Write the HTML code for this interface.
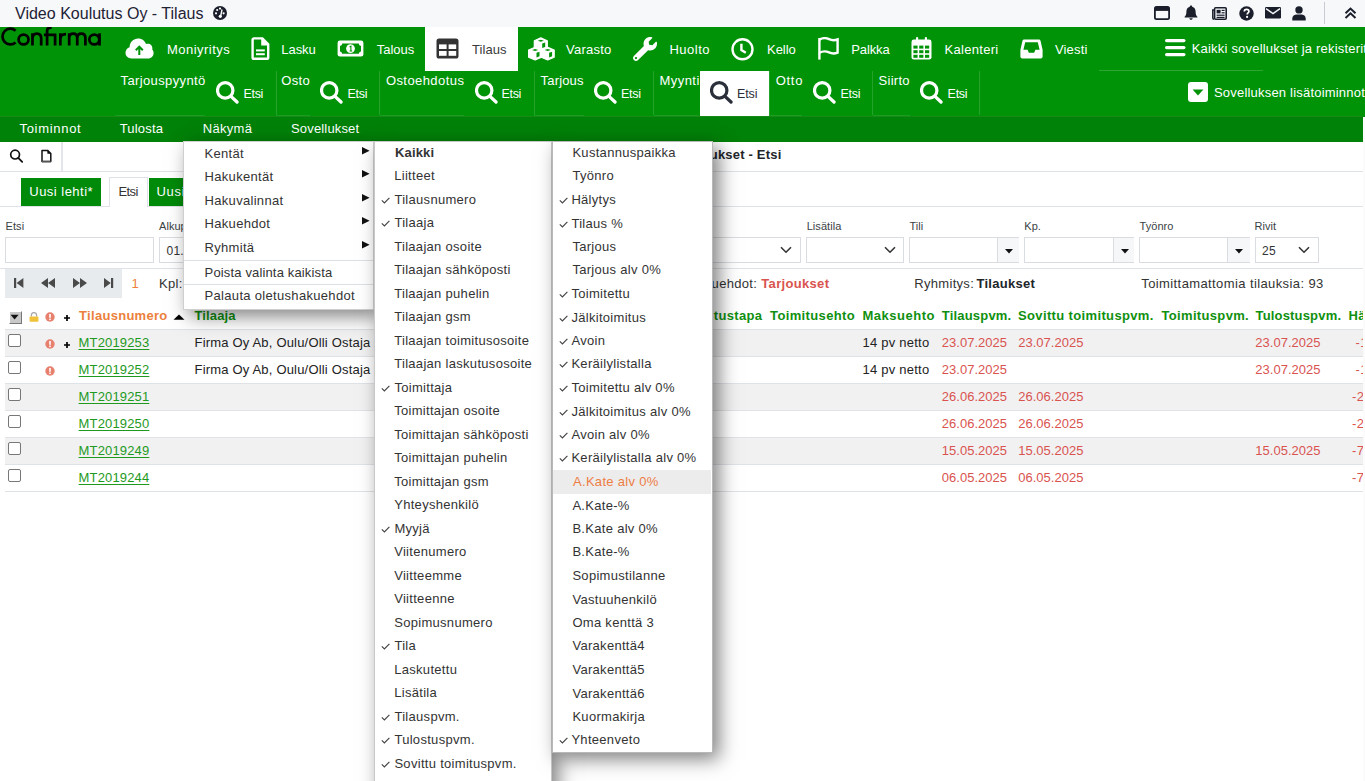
<!DOCTYPE html><html><head><meta charset="utf-8"><style>html,body{margin:0;padding:0;width:1365px;height:781px;overflow:hidden;background:#fff;}body{position:relative;font-family:"Liberation Sans", sans-serif;}.t{position:absolute;white-space:pre;line-height:1;}.L{position:absolute;left:0;top:0;width:1365px;height:781px;}</style></head><body>
<div style="position:absolute;left:0px;top:0px;width:1365px;height:27px;background:#f7f8fa;"></div>
<svg style="position:absolute;left:212px;top:5px;" width="16" height="16" viewBox="0 0 16 16"><circle cx="8" cy="8" r="7" fill="#1b1f2b"/><circle cx="4" cy="8.3" r="1.1" fill="#fff"/><circle cx="5.2" cy="5" r="1.1" fill="#fff"/><circle cx="8" cy="3.6" r="1.1" fill="#fff"/><circle cx="11.6" cy="8.3" r="1.1" fill="#fff"/><path d="M10 4.5 L8.8 10.6" stroke="#fff" stroke-width="1.4"/><circle cx="8.3" cy="11.3" r="1.6" fill="#fff"/></svg>
<svg style="position:absolute;left:1154px;top:6px;" width="16" height="14" viewBox="0 0 16 14"><rect x="0.9" y="0.9" width="14.2" height="12.2" rx="1.6" fill="none" stroke="#1b1f2b" stroke-width="1.8"/><rect x="0.9" y="0.9" width="14.2" height="4" fill="#1b1f2b"/></svg>
<svg style="position:absolute;left:1184px;top:5px;" width="14" height="15" viewBox="0 0 14 15"><path d="M7 0.5 C7.8 0.5 8.2 1 8.2 1.7 C10.6 2.2 11.6 4.2 11.6 6.6 C11.6 9.6 12.2 10.8 13.4 11.8 L13.4 12.6 L0.6 12.6 L0.6 11.8 C1.8 10.8 2.4 9.6 2.4 6.6 C2.4 4.2 3.4 2.2 5.8 1.7 C5.8 1 6.2 0.5 7 0.5 Z" fill="#1b1f2b"/><path d="M5.3 13.3 L8.7 13.3 C8.7 14.2 8 14.8 7 14.8 C6 14.8 5.3 14.2 5.3 13.3Z" fill="#1b1f2b"/></svg>
<svg style="position:absolute;left:1212px;top:7px;" width="15" height="13" viewBox="0 0 15 13"><rect x="2.6" y="0.8" width="11.6" height="11.4" rx="1" fill="none" stroke="#1b1f2b" stroke-width="1.6"/><path d="M2.6 3 L0.8 3 L0.8 11 C0.8 11.8 1.4 12.2 2 12.2" fill="none" stroke="#1b1f2b" stroke-width="1.5"/><rect x="4.6" y="2.8" width="4" height="3.6" fill="#1b1f2b"/><rect x="9.6" y="2.8" width="3" height="1.2" fill="#1b1f2b"/><rect x="9.6" y="5.2" width="3" height="1.2" fill="#1b1f2b"/><rect x="4.6" y="7.6" width="8" height="1.2" fill="#1b1f2b"/><rect x="4.6" y="9.8" width="8" height="1.2" fill="#1b1f2b"/></svg>
<svg style="position:absolute;left:1239px;top:6px;" width="15" height="15" viewBox="0 0 15 15"><circle cx="7.5" cy="7.5" r="7.2" fill="#1b1f2b"/><path d="M5.3 5.6 C5.3 4.2 6.3 3.4 7.6 3.4 C8.9 3.4 9.9 4.2 9.9 5.4 C9.9 6.9 8.2 7 8.2 8.4" fill="none" stroke="#fff" stroke-width="1.7"/><circle cx="8.1" cy="10.9" r="1.1" fill="#fff"/></svg>
<svg style="position:absolute;left:1265px;top:7px;" width="16" height="12" viewBox="0 0 16 12"><rect x="0" y="0" width="16" height="11.5" rx="1.2" fill="#1b1f2b"/><path d="M1 1.6 L8 6.6 L15 1.6" fill="none" stroke="#f7f8fa" stroke-width="1.4"/></svg>
<svg style="position:absolute;left:1292px;top:6px;" width="14" height="15" viewBox="0 0 14 15"><circle cx="7" cy="3.9" r="3.7" fill="#1b1f2b"/><path d="M0.3 14.5 L0.3 12.6 C0.3 10.2 2.4 8.6 4.8 8.6 L9.2 8.6 C11.6 8.6 13.7 10.2 13.7 12.6 L13.7 14.5 Z" fill="#1b1f2b"/></svg>
<div style="position:absolute;left:1324px;top:2px;width:1px;height:22px;background:#c8ccd2;"></div>
<svg style="position:absolute;left:1344px;top:7px;" width="13" height="12" viewBox="0 0 13 12"><path d="M1.5 6.2 L6.5 1.5 L11.5 6.2 M1.5 11 L6.5 6.3 L11.5 11" fill="none" stroke="#1b1f2b" stroke-width="2"/></svg>
<div style="position:absolute;left:0px;top:27px;width:1365px;height:90px;background:#009308;"></div>
<svg style="position:absolute;left:0px;top:27px;" width="104" height="21" viewBox="0 27 104 21"><g fill="none" stroke="#000" stroke-width="2.75"><path d="M15.6 30.7 A7.85 7.85 0 1 0 15.6 42.4"/><circle cx="23.55" cy="39.5" r="4.95"/><path d="M32.5 45.6 V33.3 M32.5 38.6 C32.5 35.4 34.4 33.6 36.85 33.6 C39.3 33.6 41.2 35.4 41.2 38.6 V45.6"/><path d="M47.1 45.6 V31 C47.1 28.8 48.4 27.6 50.4 27.6 L51.6 27.6 M43.9 34.8 H56.4 M55.1 34 V45.6"/><path d="M60.35 45.6 V33.3 M60.35 38.8 C60.35 35.6 62.4 34 66 34"/><path d="M69.2 45.6 V33.3 M69.2 38.2 C69.2 35.4 70.8 33.6 73.2 33.6 C75.6 33.6 77.25 35.4 77.25 38.2 V45.6 M77.25 38.2 C77.25 35.4 78.9 33.6 81.3 33.6 C83.7 33.6 85.4 35.4 85.4 38.2 V45.6"/><circle cx="94.3" cy="39.5" r="4.95"/><path d="M99.5 33.3 V45.6"/></g></svg>
<svg style="position:absolute;left:125px;top:38px;" width="29" height="21" viewBox="0 0 29 21"><path d="M6.5 20.5 C3 20.5 0.5 18 0.5 14.8 C0.5 12.2 2.2 10 4.6 9.3 C4.6 4.4 8.4 0.6 13.2 0.6 C16.8 0.6 19.8 2.8 21 6 C21.6 5.8 22.2 5.7 22.8 5.7 C25.4 5.7 27.4 7.8 27.4 10.3 C27.4 10.8 27.3 11.2 27.2 11.6 C28.2 12.6 28.6 13.6 28.6 15 C28.6 18 26.2 20.5 23.2 20.5 Z" fill="#fff"/><path d="M14.3 17 L14.3 9 M10.8 12.3 L14.3 8.6 L17.8 12.3" fill="none" stroke="#009308" stroke-width="2"/></svg>
<svg style="position:absolute;left:251px;top:37px;" width="19" height="23" viewBox="0 0 19 23"><path d="M1.6 2.8 C1.6 2 2.2 1.4 3 1.4 L11.4 1.4 L17.2 7.2 L17.2 20.4 C17.2 21.2 16.6 21.8 15.8 21.8 L3 21.8 C2.2 21.8 1.6 21.2 1.6 20.4 Z" fill="none" stroke="#fff" stroke-width="2.4"/><path d="M11 1.4 L11 7.6 L17.2 7.6" fill="#fff" stroke="#fff" stroke-width="1.6"/><rect x="5" y="12.4" width="8.8" height="2" fill="#fff"/><rect x="5" y="16.2" width="8.8" height="2" fill="#fff"/></svg>
<svg style="position:absolute;left:337px;top:40px;" width="27" height="17" viewBox="0 0 27 17"><rect x="0.6" y="0.6" width="25.8" height="16" rx="2.4" fill="#fff"/><path d="M5.2 3.4 L21.8 3.4 C22 4.8 22.8 5.6 24 5.8 L24 11.4 C22.8 11.6 22 12.4 21.8 13.8 L5.2 13.8 C5 12.4 4.2 11.6 3 11.4 L3 5.8 C4.2 5.6 5 4.8 5.2 3.4 Z" fill="#009308"/><circle cx="13.5" cy="8.6" r="4.4" fill="#fff"/><path d="M12.6 6.9 L13.9 6.2 L13.9 11 M12.6 11 L15.2 11" fill="none" stroke="#009308" stroke-width="1.1"/></svg>
<div style="position:absolute;left:425px;top:27px;width:93px;height:44px;background:#fff;"></div>
<svg style="position:absolute;left:436px;top:38px;" width="23" height="21" viewBox="0 0 23 21"><rect x="0.5" y="0.5" width="22" height="20" rx="2.6" fill="#333"/><rect x="3" y="6.4" width="7.6" height="4.6" fill="#fff"/><rect x="12.6" y="6.4" width="7.6" height="4.6" fill="#fff"/><rect x="3" y="13" width="7.6" height="4.8" fill="#fff"/><rect x="12.6" y="13" width="7.6" height="4.8" fill="#fff"/></svg>
<svg style="position:absolute;left:528px;top:37px;" width="27" height="24" viewBox="0 0 27 24"><path d="M6.3 3.6999999999999997 L12.8 0.9 L19.3 3.6999999999999997 L19.3 10.9 L12.8 13.700000000000001 L6.3 10.9 Z" fill="#fff" stroke="#fff" stroke-width="1.2" stroke-linejoin="round"/><path d="M9.7 3.8 L12.8 2.8 L15.899999999999999 3.8 L12.8 4.8 Z" fill="#009308"/><path d="M14.2 6.5 L17.2 5.5 L17.2 9.9 L14.2 11.1 Z" fill="#009308"/><path d="M0.6 13.0 L7.1 10.2 L13.6 13.0 L13.6 20.2 L7.1 23.0 L0.6 20.2 Z" fill="#fff" stroke="#fff" stroke-width="1.2" stroke-linejoin="round"/><path d="M4.0 13.1 L7.1 12.1 L10.2 13.1 L7.1 14.1 Z" fill="#009308"/><path d="M8.5 15.799999999999999 L11.5 14.799999999999999 L11.5 19.2 L8.5 20.4 Z" fill="#009308"/><path d="M13.2 13.0 L19.7 10.2 L26.2 13.0 L26.2 20.2 L19.7 23.0 L13.2 20.2 Z" fill="#fff" stroke="#fff" stroke-width="1.2" stroke-linejoin="round"/><path d="M16.599999999999998 13.1 L19.7 12.1 L22.799999999999997 13.1 L19.7 14.1 Z" fill="#009308"/><path d="M21.1 15.799999999999999 L24.1 14.799999999999999 L24.1 19.2 L21.1 20.4 Z" fill="#009308"/></svg>
<svg style="position:absolute;left:633px;top:37px;" width="24" height="24" viewBox="0 0 512 512"><path fill="#fff" d="M507.73 109.1c-2.24-9.03-13.54-12.09-20.12-5.51l-74.36 74.36-67.88-11.31-11.31-67.88 74.36-74.36c6.62-6.62 3.43-17.9-5.66-20.16-47.38-11.74-99.55.91-136.58 37.930-39.64 39.64-50.55 97.1-34.05 147.2L18.74 402.76c-24.990 24.99-24.99 65.51 0 90.5 24.99 24.99 65.51 24.99 90.5 0l213.21-213.21c50.12 16.71 107.47 5.68 147.37-34.22 37.07-37.07 49.7-89.320 37.91-136.73zM64 472c-13.25 0-24-10.75-24-24 0-13.26 10.75-24 24-24s24 10.74 24 24c0 13.25-10.75 24-24 24z"/></svg>
<svg style="position:absolute;left:731px;top:38px;" width="23" height="23" viewBox="0 0 23 23"><circle cx="11.5" cy="11.3" r="10" fill="none" stroke="#fff" stroke-width="2.4"/><path d="M10.4 5.8 L10.4 12 L14.8 14.8" fill="none" stroke="#fff" stroke-width="2.4" stroke-linejoin="miter"/></svg>
<svg style="position:absolute;left:818px;top:37px;" width="21" height="23" viewBox="0 0 21 23"><path d="M1.4 1 L1.4 22.6" stroke="#fff" stroke-width="2.4"/><path d="M1.4 2.6 C5 0.6 8 0.8 11 2.2 C14 3.6 16.6 3.6 19.6 2.4 L19.6 15.6 C16.6 16.8 14 16.8 11 15.4 C8 14 5 13.8 1.4 15.8" fill="none" stroke="#fff" stroke-width="2.4"/></svg>
<svg style="position:absolute;left:911px;top:37px;" width="21" height="23" viewBox="0 0 21 23"><rect x="0.5" y="2.6" width="20" height="20" rx="2.4" fill="#fff"/><rect x="5" y="0" width="2.2" height="4.4" rx="1" fill="#fff"/><rect x="13.8" y="0" width="2.2" height="4.4" rx="1" fill="#fff"/><rect x="2.4" y="8.6" width="4.2" height="3" fill="#009308"/><rect x="8.2" y="8.6" width="4.2" height="3" fill="#009308"/><rect x="14.0" y="8.6" width="4.2" height="3" fill="#009308"/><rect x="2.4" y="13.2" width="4.2" height="3" fill="#009308"/><rect x="8.2" y="13.2" width="4.2" height="3" fill="#009308"/><rect x="14.0" y="13.2" width="4.2" height="3" fill="#009308"/><rect x="2.4" y="17.799999999999997" width="4.2" height="3" fill="#009308"/><rect x="8.2" y="17.799999999999997" width="4.2" height="3" fill="#009308"/><rect x="14.0" y="17.799999999999997" width="4.2" height="3" fill="#009308"/></svg>
<svg style="position:absolute;left:1020px;top:39px;" width="23" height="20" viewBox="0 0 23 20"><path d="M4.2 0.5 L18.8 0.5 C19.8 0.5 20.4 1.2 20.6 2 L22.6 11 L22.6 17.6 C22.6 18.8 21.8 19.6 20.6 19.6 L2.4 19.6 C1.2 19.6 0.4 18.8 0.4 17.6 L0.4 11 L2.4 2 C2.6 1.2 3.2 0.5 4.2 0.5 Z" fill="#fff"/><path d="M5.2 3.2 L17.8 3.2 L19.6 10.8 L15.4 10.8 L14.2 13.8 L8.8 13.8 L7.6 10.8 L3.4 10.8 Z" fill="#009308"/></svg>
<svg style="position:absolute;left:1165px;top:39px;" width="21" height="18" viewBox="0 0 21 18"><g fill="#fff"><rect x="0" y="0" width="20.5" height="3.2" rx="1.6"/><rect x="0" y="7" width="20.5" height="3.2" rx="1.6"/><rect x="0" y="14" width="20.5" height="3.2" rx="1.6"/></g></svg>
<div style="position:absolute;left:1099px;top:70px;width:164px;height:1px;background:rgba(255,255,255,0.18);"></div>
<svg style="position:absolute;left:1188px;top:82px;" width="20" height="20" viewBox="0 0 20 20"><rect x="0" y="0" width="20" height="20" rx="3" fill="#fff"/><path d="M4.6 7.4 L15.4 7.4 L10 13.6 Z" fill="#009308"/></svg>
<svg style="position:absolute;left:215.5px;top:81px;" width="23" height="23" viewBox="0 0 23 23"><circle cx="9.2" cy="9.4" r="7.7" fill="none" stroke="#fff" stroke-width="3.2"/><path d="M15 15.4 L21 21" stroke="#fff" stroke-width="3.3" stroke-linecap="round"/></svg>
<div style="position:absolute;left:275.7px;top:71px;width:1.0px;height:44px;background:rgba(255,255,255,0.14);"></div>
<div style="position:absolute;left:115px;top:115px;width:90.19999999999999px;height:1px;background:rgba(255,255,255,0.10);"></div>
<svg style="position:absolute;left:320.2px;top:81px;" width="23" height="23" viewBox="0 0 23 23"><circle cx="9.2" cy="9.4" r="7.7" fill="none" stroke="#fff" stroke-width="3.2"/><path d="M15 15.4 L21 21" stroke="#fff" stroke-width="3.3" stroke-linecap="round"/></svg>
<div style="position:absolute;left:379.4px;top:71px;width:1.0px;height:44px;background:rgba(255,255,255,0.14);"></div>
<div style="position:absolute;left:276px;top:115px;width:33.69999999999999px;height:1px;background:rgba(255,255,255,0.10);"></div>
<svg style="position:absolute;left:474.5px;top:81px;" width="23" height="23" viewBox="0 0 23 23"><circle cx="9.2" cy="9.4" r="7.7" fill="none" stroke="#fff" stroke-width="3.2"/><path d="M15 15.4 L21 21" stroke="#fff" stroke-width="3.3" stroke-linecap="round"/></svg>
<div style="position:absolute;left:533.5px;top:71px;width:1.0px;height:44px;background:rgba(255,255,255,0.14);"></div>
<div style="position:absolute;left:380px;top:115px;width:83.89999999999998px;height:1px;background:rgba(255,255,255,0.10);"></div>
<svg style="position:absolute;left:594.0px;top:81px;" width="23" height="23" viewBox="0 0 23 23"><circle cx="9.2" cy="9.4" r="7.7" fill="none" stroke="#fff" stroke-width="3.2"/><path d="M15 15.4 L21 21" stroke="#fff" stroke-width="3.3" stroke-linecap="round"/></svg>
<div style="position:absolute;left:653px;top:71px;width:1px;height:44px;background:rgba(255,255,255,0.14);"></div>
<div style="position:absolute;left:534px;top:115px;width:49.5px;height:1px;background:rgba(255,255,255,0.10);"></div>
<div style="position:absolute;left:700px;top:71px;width:69px;height:45px;background:#fff;"></div>
<svg style="position:absolute;left:710.0px;top:81px;" width="23" height="23" viewBox="0 0 23 23"><circle cx="9.2" cy="9.4" r="7.7" fill="none" stroke="#2a2f3a" stroke-width="3.2"/><path d="M15 15.4 L21 21" stroke="#2a2f3a" stroke-width="3.3" stroke-linecap="round"/></svg>
<div style="position:absolute;left:769px;top:71px;width:1px;height:44px;background:rgba(255,255,255,0.14);"></div>
<div style="position:absolute;left:654px;top:115px;width:45.299999999999955px;height:1px;background:rgba(255,255,255,0.10);"></div>
<svg style="position:absolute;left:812.5px;top:81px;" width="23" height="23" viewBox="0 0 23 23"><circle cx="9.2" cy="9.4" r="7.7" fill="none" stroke="#fff" stroke-width="3.2"/><path d="M15 15.4 L21 21" stroke="#fff" stroke-width="3.3" stroke-linecap="round"/></svg>
<div style="position:absolute;left:872.4px;top:71px;width:1.0px;height:44px;background:rgba(255,255,255,0.14);"></div>
<div style="position:absolute;left:769px;top:115px;width:33.39999999999998px;height:1px;background:rgba(255,255,255,0.10);"></div>
<svg style="position:absolute;left:920.2px;top:81px;" width="23" height="23" viewBox="0 0 23 23"><circle cx="9.2" cy="9.4" r="7.7" fill="none" stroke="#fff" stroke-width="3.2"/><path d="M15 15.4 L21 21" stroke="#fff" stroke-width="3.3" stroke-linecap="round"/></svg>
<div style="position:absolute;left:979.3px;top:71px;width:1.0px;height:44px;background:rgba(255,255,255,0.14);"></div>
<div style="position:absolute;left:873px;top:115px;width:36.5px;height:1px;background:rgba(255,255,255,0.10);"></div>
<div style="position:absolute;left:0px;top:117px;width:1363px;height:25px;background:#008108;"></div>
<div style="position:absolute;left:0px;top:116px;width:1363px;height:1px;background:rgb(24,136,22);"></div>
<div style="position:absolute;left:1363px;top:117px;width:2px;height:664px;background:#fbfbfb;"></div>
<svg style="position:absolute;left:9px;top:149px;" width="15" height="15" viewBox="0 0 15 15"><circle cx="6.1" cy="5.6" r="4.4" fill="none" stroke="#111" stroke-width="1.7"/><path d="M9.2 8.9 L13.2 12.9" stroke="#111" stroke-width="1.8" stroke-linecap="round"/></svg>
<svg style="position:absolute;left:40px;top:149px;" width="13" height="15" viewBox="0 0 13 15"><path d="M2 1.4 L7.6 1.4 L10.8 4.6 L10.8 12.6 L2 12.6 Z" fill="none" stroke="#111" stroke-width="1.5" stroke-linejoin="round"/><path d="M7.4 1.4 L7.4 4.8 L10.8 4.8 Z" fill="#111"/><path d="M2 12.6 L10.8 12.6" stroke="#555" stroke-width="1.5"/></svg>
<div style="position:absolute;left:61px;top:142px;width:2px;height:29px;background:#e2e5e9;"></div>
<div style="position:absolute;left:0px;top:171px;width:1363px;height:1px;background:#dfe3e7;"></div>
<div style="position:absolute;left:21px;top:178px;width:80px;height:28px;background:#008a0a;"></div>
<div style="position:absolute;left:0px;top:206px;width:1363px;height:1px;background:#dfe3e7;"></div>
<div style="position:absolute;left:109px;top:177px;width:37px;height:29px;border:1px solid #dfe3e7;border-bottom:none;background:#fff"></div>
<div style="position:absolute;left:110px;top:206px;width:37px;height:1px;background:#fff;"></div>
<div style="position:absolute;left:149px;top:178px;width:81px;height:28px;background:#008a0a;"></div>
<div style="position:absolute;left:5px;top:237px;width:147px;height:24px;border:1px solid #d9dde1;background:#fff;"></div>
<div style="position:absolute;left:159px;top:237px;width:139px;height:24px;border:1px solid #d9dde1;background:#fff;"></div>
<div style="position:absolute;left:600px;top:237px;width:199px;height:24px;border:1px solid #d9dde1;background:#fff;"></div>
<svg style="position:absolute;left:780px;top:246px;" width="12" height="8" viewBox="0 0 12 8"><path d="M1 1.2 L6 6.2 L11 1.2" fill="none" stroke="#333" stroke-width="1.6"/></svg>
<div style="position:absolute;left:806px;top:237px;width:96px;height:24px;border:1px solid #d9dde1;background:#fff;"></div>
<svg style="position:absolute;left:883.5px;top:246px;" width="12" height="8" viewBox="0 0 12 8"><path d="M1 1.2 L6 6.2 L11 1.2" fill="none" stroke="#333" stroke-width="1.6"/></svg>
<div style="position:absolute;left:909px;top:237px;width:108px;height:24px;border:1px solid #d9dde1;background:#fff;"></div>
<div style="position:absolute;left:997px;top:238px;width:21px;height:24px;border-left:1px solid #d9dde1;background:#f6f7f8"></div>
<svg style="position:absolute;left:1005px;top:249px;" width="8" height="5" viewBox="0 0 8 5"><path d="M0 0 L8 0 L4 4.5 Z" fill="#111"/></svg>
<div style="position:absolute;left:1024px;top:237px;width:108px;height:24px;border:1px solid #d9dde1;background:#fff;"></div>
<div style="position:absolute;left:1112.5px;top:238px;width:20.5px;height:24px;border-left:1px solid #d9dde1;background:#f6f7f8"></div>
<svg style="position:absolute;left:1120.5px;top:249px;" width="8" height="5" viewBox="0 0 8 5"><path d="M0 0 L8 0 L4 4.5 Z" fill="#111"/></svg>
<div style="position:absolute;left:1139px;top:237px;width:109px;height:24px;border:1px solid #d9dde1;background:#fff;"></div>
<div style="position:absolute;left:1227px;top:238px;width:22px;height:24px;border-left:1px solid #d9dde1;background:#f6f7f8"></div>
<svg style="position:absolute;left:1235px;top:249px;" width="8" height="5" viewBox="0 0 8 5"><path d="M0 0 L8 0 L4 4.5 Z" fill="#111"/></svg>
<div style="position:absolute;left:1255px;top:237px;width:62px;height:24px;border:1px solid #d9dde1;background:#fff;"></div>
<svg style="position:absolute;left:1298px;top:246px;" width="12" height="8" viewBox="0 0 12 8"><path d="M1 1.2 L6 6.2 L11 1.2" fill="none" stroke="#333" stroke-width="1.6"/></svg>
<div style="position:absolute;left:0px;top:268px;width:1363px;height:1px;background:#dfe3e7;"></div>
<div style="position:absolute;left:5px;top:269px;width:117px;height:29px;background:#e8ebee;"></div>
<svg style="position:absolute;left:14px;top:278px;" width="10" height="10" viewBox="0 0 10 10"><rect x="0" y="0" width="2.2" height="10" fill="#4a4a4a"/><path d="M9.4 0 L9.4 10 L2.6 5 Z" fill="#4a4a4a"/></svg>
<svg style="position:absolute;left:41px;top:278px;" width="14" height="10" viewBox="0 0 14 10"><path d="M7 0 L7 10 L0 5 Z M14 0 L14 10 L7 5 Z" fill="#4a4a4a"/></svg>
<svg style="position:absolute;left:73px;top:278px;" width="14" height="10" viewBox="0 0 14 10"><path d="M0 0 L0 10 L7 5 Z M7 0 L7 10 L14 5 Z" fill="#4a4a4a"/></svg>
<svg style="position:absolute;left:104px;top:278px;" width="10" height="10" viewBox="0 0 10 10"><path d="M0 0 L0 10 L6.8 5 Z" fill="#4a4a4a"/><rect x="7" y="0" width="2.2" height="10" fill="#4a4a4a"/></svg>
<div style="position:absolute;left:9px;top:311px;width:11px;height:11px;background:#c8c8c8;border-top:1px solid #fff;border-left:1px solid #fff;border-right:1px solid #777;border-bottom:1px solid #777;"></div>
<svg style="position:absolute;left:10px;top:314px;" width="10" height="7" viewBox="0 0 10 7"><path d="M0.6 0.8 L8.6 0.8 L4.6 5.6 Z" fill="#111"/></svg>
<svg style="position:absolute;left:29px;top:312px;" width="10" height="10" viewBox="0 0 10 10"><path d="M2.4 4.6 L2.4 3.2 C2.4 1.6 3.5 0.6 5 0.6 C6.5 0.6 7.6 1.6 7.6 3.2 L7.6 4.6" fill="none" stroke="#a8a8a8" stroke-width="1.3"/><rect x="0.6" y="4.4" width="8.8" height="5.4" rx="0.8" fill="#f0c23a"/></svg>
<svg style="position:absolute;left:45px;top:312px;" width="10" height="10" viewBox="0 0 10 10"><circle cx="5" cy="5" r="4.7" fill="#e8806e"/><rect x="4.2" y="2" width="1.6" height="3.8" fill="#fff"/><rect x="4.2" y="6.6" width="1.6" height="1.5" fill="#fff"/></svg>
<svg style="position:absolute;left:63px;top:313.5px;" width="8" height="8" viewBox="0 0 8 8"><path d="M4 1 L4 7 M1 4 L7 4" stroke="#000" stroke-width="1.7"/></svg>
<svg style="position:absolute;left:173px;top:314px;" width="12" height="6" viewBox="0 0 12 6"><path d="M0.5 5.8 L6 0.5 L11.5 5.8 Z" fill="#000"/></svg>
<div style="position:absolute;left:5px;top:329px;width:1358px;height:27px;background:#f1f1f2;"></div>
<div style="position:absolute;left:5px;top:329px;width:1358px;height:1px;background:#dfe2e6;"></div>
<div style="position:absolute;left:8px;top:334px;width:11px;height:11px;border:1px solid #777;border-radius:2px;background:#fff"></div>
<svg style="position:absolute;left:45px;top:339px;" width="10" height="10" viewBox="0 0 10 10"><circle cx="5" cy="5" r="4.7" fill="#e8806e"/><rect x="4.2" y="2" width="1.6" height="3.8" fill="#fff"/><rect x="4.2" y="6.6" width="1.6" height="1.5" fill="#fff"/></svg>
<svg style="position:absolute;left:63px;top:340.5px;" width="8" height="8" viewBox="0 0 8 8"><path d="M4 1 L4 7 M1 4 L7 4" stroke="#000" stroke-width="1.7"/></svg>
<div style="position:absolute;left:5px;top:356px;width:1358px;height:1px;background:#dfe2e6;"></div>
<div style="position:absolute;left:8px;top:361px;width:11px;height:11px;border:1px solid #777;border-radius:2px;background:#fff"></div>
<svg style="position:absolute;left:45px;top:366px;" width="10" height="10" viewBox="0 0 10 10"><circle cx="5" cy="5" r="4.7" fill="#e8806e"/><rect x="4.2" y="2" width="1.6" height="3.8" fill="#fff"/><rect x="4.2" y="6.6" width="1.6" height="1.5" fill="#fff"/></svg>
<div style="position:absolute;left:5px;top:383px;width:1358px;height:27px;background:#f1f1f2;"></div>
<div style="position:absolute;left:5px;top:383px;width:1358px;height:1px;background:#dfe2e6;"></div>
<div style="position:absolute;left:8px;top:388px;width:11px;height:11px;border:1px solid #777;border-radius:2px;background:#fff"></div>
<div style="position:absolute;left:5px;top:410px;width:1358px;height:1px;background:#dfe2e6;"></div>
<div style="position:absolute;left:8px;top:415px;width:11px;height:11px;border:1px solid #777;border-radius:2px;background:#fff"></div>
<div style="position:absolute;left:5px;top:437px;width:1358px;height:27px;background:#f1f1f2;"></div>
<div style="position:absolute;left:5px;top:437px;width:1358px;height:1px;background:#dfe2e6;"></div>
<div style="position:absolute;left:8px;top:442px;width:11px;height:11px;border:1px solid #777;border-radius:2px;background:#fff"></div>
<div style="position:absolute;left:5px;top:464px;width:1358px;height:1px;background:#dfe2e6;"></div>
<div style="position:absolute;left:8px;top:469px;width:11px;height:11px;border:1px solid #777;border-radius:2px;background:#fff"></div>
<div style="position:absolute;left:5px;top:491px;width:1358px;height:1px;background:#dfe2e6;"></div>
<span class="t" style="left:15px;top:5.60px;font-size:16px;color:#1e2235;letter-spacing:0.010px;">Video Koulutus Oy - Tilaus</span>
<span class="t" style="left:167px;top:43.00px;font-size:13px;color:#fff;letter-spacing:0.465px;">Moniyritys</span>
<span class="t" style="left:281.3px;top:43.00px;font-size:13px;color:#fff;letter-spacing:-0.051px;">Lasku</span>
<span class="t" style="left:376.7px;top:43.00px;font-size:13px;color:#fff;letter-spacing:0.004px;">Talous</span>
<span class="t" style="left:472px;top:43.00px;font-size:13px;color:#3a3a3a;letter-spacing:0.059px;">Tilaus</span>
<span class="t" style="left:566px;top:43.00px;font-size:13px;color:#fff;letter-spacing:0.226px;">Varasto</span>
<span class="t" style="left:669.5px;top:43.00px;font-size:13px;color:#fff;letter-spacing:0.484px;">Huolto</span>
<span class="t" style="left:767px;top:43.00px;font-size:13px;color:#fff;letter-spacing:-0.030px;">Kello</span>
<span class="t" style="left:851.2px;top:43.00px;font-size:13px;color:#fff;letter-spacing:-0.106px;">Palkka</span>
<span class="t" style="left:944.6px;top:43.00px;font-size:13px;color:#fff;letter-spacing:0.286px;">Kalenteri</span>
<span class="t" style="left:1055px;top:43.00px;font-size:13px;color:#fff;letter-spacing:0.147px;">Viesti</span>
<span class="t" style="left:1191.7px;top:41.50px;font-size:13px;color:#fff;letter-spacing:0.200px;">Kaikki sovellukset ja rekisterit</span>
<span class="t" style="left:1214px;top:85.50px;font-size:13px;color:#fff;letter-spacing:0.200px;">Sovelluksen lisätoiminnot</span>
<span class="t" style="left:120.6px;top:74.00px;font-size:13px;color:#fff;letter-spacing:0.365px;">Tarjouspyyntö</span>
<span class="t" style="left:243.4px;top:88.00px;font-size:12.5px;color:#fff;letter-spacing:-0.281px;">Etsi</span>
<span class="t" style="left:281.2px;top:74.00px;font-size:13px;color:#fff;letter-spacing:0.344px;">Osto</span>
<span class="t" style="left:347.5px;top:88.00px;font-size:12.5px;color:#fff;letter-spacing:-0.281px;">Etsi</span>
<span class="t" style="left:385.9px;top:74.00px;font-size:13px;color:#fff;letter-spacing:0.428px;">Ostoehdotus</span>
<span class="t" style="left:501.4px;top:88.00px;font-size:12.5px;color:#fff;letter-spacing:-0.281px;">Etsi</span>
<span class="t" style="left:540.6px;top:74.00px;font-size:13px;color:#fff;letter-spacing:0.163px;">Tarjous</span>
<span class="t" style="left:621px;top:88.00px;font-size:12.5px;color:#fff;letter-spacing:-0.281px;">Etsi</span>
<span class="t" style="left:659.5px;top:74.00px;font-size:13px;color:#fff;letter-spacing:0.447px;">Myynti</span>
<span class="t" style="left:737px;top:88.00px;font-size:12.5px;color:#2a2f3a;letter-spacing:-0.115px;">Etsi</span>
<span class="t" style="left:775.8px;top:74.00px;font-size:13px;color:#fff;letter-spacing:0.674px;">Otto</span>
<span class="t" style="left:840.5px;top:88.00px;font-size:12.5px;color:#fff;letter-spacing:-0.281px;">Etsi</span>
<span class="t" style="left:878.6px;top:74.00px;font-size:13px;color:#fff;letter-spacing:0.255px;">Siirto</span>
<span class="t" style="left:947.6px;top:88.00px;font-size:12.5px;color:#fff;letter-spacing:-0.281px;">Etsi</span>
<span class="t" style="left:19.5px;top:122.00px;font-size:13px;color:#fff;letter-spacing:0.695px;">Toiminnot</span>
<span class="t" style="left:119.7px;top:122.00px;font-size:13px;color:#fff;letter-spacing:0.191px;">Tulosta</span>
<span class="t" style="left:202.7px;top:122.00px;font-size:13px;color:#fff;letter-spacing:0.322px;">Näkymä</span>
<span class="t" style="left:291px;top:122.00px;font-size:13px;color:#fff;letter-spacing:0.162px;">Sovellukset</span>
<span class="t" style="right:583.5px;top:148.00px;font-size:13px;font-weight:700;color:#212529;letter-spacing:0.200px;">Tilaukset - Etsi</span>
<span class="t" style="left:29.3px;top:185.00px;font-size:13px;color:#fff;letter-spacing:0.477px;">Uusi lehti*</span>
<span class="t" style="left:118.4px;top:185.00px;font-size:13px;color:#333;letter-spacing:-0.557px;">Etsi</span>
<span class="t" style="left:156.5px;top:185.00px;font-size:13px;color:#fff;letter-spacing:0.726px;">Uusi lehti</span>
<span class="t" style="left:5.6px;top:220.50px;font-size:11px;color:#3a3f44;letter-spacing:0.050px;">Etsi</span>
<span class="t" style="left:159px;top:220.50px;font-size:11px;color:#3a3f44;letter-spacing:0.050px;">Alkupvm</span>
<span class="t" style="left:806.7px;top:220.50px;font-size:11px;color:#3a3f44;letter-spacing:0.050px;">Lisätila</span>
<span class="t" style="left:909.5px;top:220.50px;font-size:11px;color:#3a3f44;letter-spacing:0.050px;">Tili</span>
<span class="t" style="left:1024.3px;top:220.50px;font-size:11px;color:#3a3f44;letter-spacing:0.050px;">Kp.</span>
<span class="t" style="left:1139.5px;top:220.50px;font-size:11px;color:#3a3f44;letter-spacing:0.050px;">Työnro</span>
<span class="t" style="left:1254.5px;top:220.50px;font-size:11px;color:#3a3f44;letter-spacing:0.050px;">Rivit</span>
<span class="t" style="left:166.6px;top:245.00px;font-size:12px;color:#333;letter-spacing:0.200px;">01.07.2025</span>
<span class="t" style="left:1262px;top:245.00px;font-size:12px;color:#333;letter-spacing:0.300px;">25</span>
<span class="t" style="left:131.4px;top:277.00px;font-size:13px;color:#ec7f3c;letter-spacing:0.000px;">1</span>
<span class="t" style="left:159px;top:277.00px;font-size:13px;color:#333;letter-spacing:0.300px;">Kpl: 6</span>
<span class="t" style="right:604px;top:277.00px;font-size:13px;color:#333;letter-spacing:0.300px;">Hakuehdot: </span>
<span class="t" style="left:761.3px;top:277.00px;font-size:13px;font-weight:700;color:#d9534f;letter-spacing:0.324px;">Tarjoukset</span>
<span class="t" style="left:914.3px;top:277.00px;font-size:13px;color:#333;letter-spacing:0.300px;">Ryhmitys: </span>
<span class="t" style="right:329.79999999999995px;top:277.00px;font-size:13px;font-weight:700;color:#212529;letter-spacing:0.300px;">Tilaukset</span>
<span class="t" style="left:1141.3px;top:277.00px;font-size:13px;color:#333;letter-spacing:0.396px;">Toimittamattomia tilauksia: 93</span>
<span class="t" style="left:79.1px;top:309.00px;font-size:13px;font-weight:700;color:#ec7f3c;letter-spacing:0.289px;">Tilausnumero</span>
<span class="t" style="left:194.5px;top:309.00px;font-size:13px;font-weight:700;color:#109010;letter-spacing:0.144px;">Tilaaja</span>
<span class="t" style="right:602.6px;top:309.00px;font-size:13px;font-weight:700;color:#109010;letter-spacing:0.350px;">Toimitustapa</span>
<span class="t" style="left:770.1px;top:309.00px;font-size:13px;font-weight:700;color:#109010;letter-spacing:0.360px;">Toimitusehto</span>
<span class="t" style="left:862.5px;top:309.00px;font-size:13px;font-weight:700;color:#109010;letter-spacing:0.512px;">Maksuehto</span>
<span class="t" style="left:941.8px;top:309.00px;font-size:13px;font-weight:700;color:#109010;letter-spacing:0.190px;">Tilauspvm.</span>
<span class="t" style="left:1018px;top:309.00px;font-size:13px;font-weight:700;color:#109010;letter-spacing:0.360px;">Sovittu toimituspvm.</span>
<span class="t" style="left:1161.5px;top:309.00px;font-size:13px;font-weight:700;color:#109010;letter-spacing:0.332px;">Toimituspvm.</span>
<span class="t" style="left:1255.5px;top:309.00px;font-size:13px;font-weight:700;color:#109010;letter-spacing:0.178px;">Tulostuspvm.</span>
<span class="t" style="left:1348.5px;top:309.00px;font-size:13px;font-weight:700;color:#109010;letter-spacing:0.350px;">Hälytys</span>
<span class="t" style="left:194.5px;top:336.00px;font-size:13px;color:#222;letter-spacing:0.186px;">Firma Oy Ab, Oulu/Olli Ostaja</span>
<span class="t" style="left:862.5px;top:336.00px;font-size:13px;color:#222;letter-spacing:0.237px;">14 pv netto</span>
<span class="t" style="left:78.6px;top:336.00px;font-size:13px;color:#1e9a1e;letter-spacing:0.151px;text-decoration:underline;text-underline-offset:2px;">MT2019253</span>
<span class="t" style="left:941.8px;top:336.00px;font-size:13px;color:#d9534f;letter-spacing:0.014px;">23.07.2025</span>
<span class="t" style="left:1018.2px;top:336.00px;font-size:13px;color:#d9534f;letter-spacing:0.014px;">23.07.2025</span>
<span class="t" style="left:1255.3px;top:336.00px;font-size:13px;color:#d9534f;letter-spacing:0.014px;">23.07.2025</span>
<span class="t" style="left:1355.5px;top:336.00px;font-size:13px;color:#d9534f;letter-spacing:0.300px;">-100</span>
<span class="t" style="left:194.5px;top:363.00px;font-size:13px;color:#222;letter-spacing:0.186px;">Firma Oy Ab, Oulu/Olli Ostaja</span>
<span class="t" style="left:862.5px;top:363.00px;font-size:13px;color:#222;letter-spacing:0.237px;">14 pv netto</span>
<span class="t" style="left:78.6px;top:363.00px;font-size:13px;color:#1e9a1e;letter-spacing:0.151px;text-decoration:underline;text-underline-offset:2px;">MT2019252</span>
<span class="t" style="left:941.8px;top:363.00px;font-size:13px;color:#d9534f;letter-spacing:0.014px;">23.07.2025</span>
<span class="t" style="left:1255.3px;top:363.00px;font-size:13px;color:#d9534f;letter-spacing:0.014px;">23.07.2025</span>
<span class="t" style="left:1355.5px;top:363.00px;font-size:13px;color:#d9534f;letter-spacing:0.300px;">-100</span>
<span class="t" style="left:78.6px;top:390.00px;font-size:13px;color:#1e9a1e;letter-spacing:0.151px;text-decoration:underline;text-underline-offset:2px;">MT2019251</span>
<span class="t" style="left:941.8px;top:390.00px;font-size:13px;color:#d9534f;letter-spacing:0.014px;">26.06.2025</span>
<span class="t" style="left:1018.2px;top:390.00px;font-size:13px;color:#d9534f;letter-spacing:0.014px;">26.06.2025</span>
<span class="t" style="left:1352px;top:390.00px;font-size:13px;color:#d9534f;letter-spacing:0.300px;">-200</span>
<span class="t" style="left:78.6px;top:417.00px;font-size:13px;color:#1e9a1e;letter-spacing:0.151px;text-decoration:underline;text-underline-offset:2px;">MT2019250</span>
<span class="t" style="left:941.8px;top:417.00px;font-size:13px;color:#d9534f;letter-spacing:0.014px;">26.06.2025</span>
<span class="t" style="left:1018.2px;top:417.00px;font-size:13px;color:#d9534f;letter-spacing:0.014px;">26.06.2025</span>
<span class="t" style="left:1352px;top:417.00px;font-size:13px;color:#d9534f;letter-spacing:0.300px;">-200</span>
<span class="t" style="left:78.6px;top:444.00px;font-size:13px;color:#1e9a1e;letter-spacing:0.151px;text-decoration:underline;text-underline-offset:2px;">MT2019249</span>
<span class="t" style="left:941.8px;top:444.00px;font-size:13px;color:#d9534f;letter-spacing:0.014px;">15.05.2025</span>
<span class="t" style="left:1018.2px;top:444.00px;font-size:13px;color:#d9534f;letter-spacing:0.014px;">15.05.2025</span>
<span class="t" style="left:1255.3px;top:444.00px;font-size:13px;color:#d9534f;letter-spacing:0.014px;">15.05.2025</span>
<span class="t" style="left:1352px;top:444.00px;font-size:13px;color:#d9534f;letter-spacing:0.300px;">-700</span>
<span class="t" style="left:78.6px;top:471.00px;font-size:13px;color:#1e9a1e;letter-spacing:0.151px;text-decoration:underline;text-underline-offset:2px;">MT2019244</span>
<span class="t" style="left:941.8px;top:471.00px;font-size:13px;color:#d9534f;letter-spacing:0.014px;">06.05.2025</span>
<span class="t" style="left:1018.2px;top:471.00px;font-size:13px;color:#d9534f;letter-spacing:0.014px;">06.05.2025</span>
<span class="t" style="left:1352px;top:471.00px;font-size:13px;color:#d9534f;letter-spacing:0.300px;">-700</span>
<div style="position:absolute;left:1363px;top:117px;width:2px;height:664px;background:#fbfbfb;"></div>
<div style="position:absolute;left:183px;top:141px;width:189px;height:167px;border:1px solid #cfcfcf;background:#fff;box-shadow:6px 6px 18px rgba(0,0,0,0.5);"></div>
<svg style="position:absolute;left:362px;top:146.7px;" width="8" height="8" viewBox="0 0 8 8"><path d="M0 0 L7.6 3.8 L0 7.6 Z" fill="#111"/></svg>
<svg style="position:absolute;left:362px;top:169.7px;" width="8" height="8" viewBox="0 0 8 8"><path d="M0 0 L7.6 3.8 L0 7.6 Z" fill="#111"/></svg>
<svg style="position:absolute;left:362px;top:193.7px;" width="8" height="8" viewBox="0 0 8 8"><path d="M0 0 L7.6 3.8 L0 7.6 Z" fill="#111"/></svg>
<svg style="position:absolute;left:362px;top:216.7px;" width="8" height="8" viewBox="0 0 8 8"><path d="M0 0 L7.6 3.8 L0 7.6 Z" fill="#111"/></svg>
<svg style="position:absolute;left:362px;top:240.7px;" width="8" height="8" viewBox="0 0 8 8"><path d="M0 0 L7.6 3.8 L0 7.6 Z" fill="#111"/></svg>
<div style="position:absolute;left:184px;top:260px;width:189px;height:1px;background:#dde1e5;"></div>
<div style="position:absolute;left:184px;top:284px;width:189px;height:1px;background:#dde1e5;"></div>
<span class="t" style="left:204.6px;top:147.00px;font-size:13px;color:#333;letter-spacing:0.300px;">Kentät</span>
<span class="t" style="left:204.6px;top:170.00px;font-size:13px;color:#333;letter-spacing:0.300px;">Hakukentät</span>
<span class="t" style="left:204.6px;top:194.00px;font-size:13px;color:#333;letter-spacing:0.300px;">Hakuvalinnat</span>
<span class="t" style="left:204.6px;top:217.00px;font-size:13px;color:#333;letter-spacing:0.300px;">Hakuehdot</span>
<span class="t" style="left:204.6px;top:241.00px;font-size:13px;color:#333;letter-spacing:0.300px;">Ryhmitä</span>
<span class="t" style="left:204.6px;top:266.00px;font-size:13px;color:#333;letter-spacing:0.150px;">Poista valinta kaikista</span>
<span class="t" style="left:204.6px;top:289.00px;font-size:13px;color:#333;letter-spacing:0.312px;">Palauta oletushakuehdot</span>
<div style="position:absolute;left:374px;top:141px;width:176px;height:700px;border:1px solid #c8c8c8;background:#fff;box-shadow:6px 6px 18px rgba(0,0,0,0.5);"></div>
<svg style="position:absolute;left:381px;top:197px;" width="9" height="7" viewBox="0 0 9 7"><path d="M0.8 3.4 L3.4 6 L8.4 0.8" fill="none" stroke="#444" stroke-width="1.15"/></svg>
<svg style="position:absolute;left:381px;top:220px;" width="9" height="7" viewBox="0 0 9 7"><path d="M0.8 3.4 L3.4 6 L8.4 0.8" fill="none" stroke="#444" stroke-width="1.15"/></svg>
<svg style="position:absolute;left:381px;top:385px;" width="9" height="7" viewBox="0 0 9 7"><path d="M0.8 3.4 L3.4 6 L8.4 0.8" fill="none" stroke="#444" stroke-width="1.15"/></svg>
<svg style="position:absolute;left:381px;top:526px;" width="9" height="7" viewBox="0 0 9 7"><path d="M0.8 3.4 L3.4 6 L8.4 0.8" fill="none" stroke="#444" stroke-width="1.15"/></svg>
<svg style="position:absolute;left:381px;top:643px;" width="9" height="7" viewBox="0 0 9 7"><path d="M0.8 3.4 L3.4 6 L8.4 0.8" fill="none" stroke="#444" stroke-width="1.15"/></svg>
<svg style="position:absolute;left:381px;top:714px;" width="9" height="7" viewBox="0 0 9 7"><path d="M0.8 3.4 L3.4 6 L8.4 0.8" fill="none" stroke="#444" stroke-width="1.15"/></svg>
<svg style="position:absolute;left:381px;top:737px;" width="9" height="7" viewBox="0 0 9 7"><path d="M0.8 3.4 L3.4 6 L8.4 0.8" fill="none" stroke="#444" stroke-width="1.15"/></svg>
<svg style="position:absolute;left:381px;top:761px;" width="9" height="7" viewBox="0 0 9 7"><path d="M0.8 3.4 L3.4 6 L8.4 0.8" fill="none" stroke="#444" stroke-width="1.15"/></svg>
<span class="t" style="left:395px;top:146.00px;font-size:13px;font-weight:700;color:#333;letter-spacing:0.150px;">Kaikki</span>
<span class="t" style="left:394.2px;top:169.00px;font-size:13px;color:#333;letter-spacing:0.300px;">Liitteet</span>
<span class="t" style="left:394.4px;top:193.00px;font-size:13px;color:#333;letter-spacing:0.300px;">Tilausnumero</span>
<span class="t" style="left:394.4px;top:216.00px;font-size:13px;color:#333;letter-spacing:0.300px;">Tilaaja</span>
<span class="t" style="left:394.2px;top:240.00px;font-size:13px;color:#333;letter-spacing:0.300px;">Tilaajan osoite</span>
<span class="t" style="left:394.2px;top:263.00px;font-size:13px;color:#333;letter-spacing:0.300px;">Tilaajan sähköposti</span>
<span class="t" style="left:394.2px;top:287.00px;font-size:13px;color:#333;letter-spacing:0.300px;">Tilaajan puhelin</span>
<span class="t" style="left:394.2px;top:310.00px;font-size:13px;color:#333;letter-spacing:0.300px;">Tilaajan gsm</span>
<span class="t" style="left:394.2px;top:334.00px;font-size:13px;color:#333;letter-spacing:0.300px;">Tilaajan toimitusosoite</span>
<span class="t" style="left:394.2px;top:357.00px;font-size:13px;color:#333;letter-spacing:0.300px;">Tilaajan laskutusosoite</span>
<span class="t" style="left:394.4px;top:381.00px;font-size:13px;color:#333;letter-spacing:0.300px;">Toimittaja</span>
<span class="t" style="left:394.2px;top:404.00px;font-size:13px;color:#333;letter-spacing:0.300px;">Toimittajan osoite</span>
<span class="t" style="left:394.2px;top:428.00px;font-size:13px;color:#333;letter-spacing:0.300px;">Toimittajan sähköposti</span>
<span class="t" style="left:394.2px;top:451.00px;font-size:13px;color:#333;letter-spacing:0.300px;">Toimittajan puhelin</span>
<span class="t" style="left:394.2px;top:475.00px;font-size:13px;color:#333;letter-spacing:0.300px;">Toimittajan gsm</span>
<span class="t" style="left:394.2px;top:498.00px;font-size:13px;color:#333;letter-spacing:0.300px;">Yhteyshenkilö</span>
<span class="t" style="left:394.4px;top:522.00px;font-size:13px;color:#333;letter-spacing:0.300px;">Myyjä</span>
<span class="t" style="left:394.2px;top:545.00px;font-size:13px;color:#333;letter-spacing:0.300px;">Viitenumero</span>
<span class="t" style="left:394.2px;top:569.00px;font-size:13px;color:#333;letter-spacing:0.300px;">Viitteemme</span>
<span class="t" style="left:394.2px;top:592.00px;font-size:13px;color:#333;letter-spacing:0.300px;">Viitteenne</span>
<span class="t" style="left:394.2px;top:616.00px;font-size:13px;color:#333;letter-spacing:0.300px;">Sopimusnumero</span>
<span class="t" style="left:394.4px;top:639.00px;font-size:13px;color:#333;letter-spacing:0.300px;">Tila</span>
<span class="t" style="left:394.2px;top:663.00px;font-size:13px;color:#333;letter-spacing:0.300px;">Laskutettu</span>
<span class="t" style="left:394.2px;top:686.00px;font-size:13px;color:#333;letter-spacing:0.300px;">Lisätila</span>
<span class="t" style="left:394.4px;top:710.00px;font-size:13px;color:#333;letter-spacing:0.300px;">Tilauspvm.</span>
<span class="t" style="left:394.4px;top:733.00px;font-size:13px;color:#333;letter-spacing:0.300px;">Tulostuspvm.</span>
<span class="t" style="left:394.4px;top:757.00px;font-size:13px;color:#333;letter-spacing:0.300px;">Sovittu toimituspvm.</span>
<div style="position:absolute;left:552px;top:141px;width:159px;height:610px;border:1px solid #b8b8b8;background:#fff;box-shadow:6px 6px 18px rgba(0,0,0,0.5);"></div>
<svg style="position:absolute;left:559px;top:197px;" width="9" height="7" viewBox="0 0 9 7"><path d="M0.8 3.4 L3.4 6 L8.4 0.8" fill="none" stroke="#444" stroke-width="1.15"/></svg>
<svg style="position:absolute;left:559px;top:221px;" width="9" height="7" viewBox="0 0 9 7"><path d="M0.8 3.4 L3.4 6 L8.4 0.8" fill="none" stroke="#444" stroke-width="1.15"/></svg>
<svg style="position:absolute;left:559px;top:291px;" width="9" height="7" viewBox="0 0 9 7"><path d="M0.8 3.4 L3.4 6 L8.4 0.8" fill="none" stroke="#444" stroke-width="1.15"/></svg>
<svg style="position:absolute;left:559px;top:315px;" width="9" height="7" viewBox="0 0 9 7"><path d="M0.8 3.4 L3.4 6 L8.4 0.8" fill="none" stroke="#444" stroke-width="1.15"/></svg>
<svg style="position:absolute;left:559px;top:338px;" width="9" height="7" viewBox="0 0 9 7"><path d="M0.8 3.4 L3.4 6 L8.4 0.8" fill="none" stroke="#444" stroke-width="1.15"/></svg>
<svg style="position:absolute;left:559px;top:361px;" width="9" height="7" viewBox="0 0 9 7"><path d="M0.8 3.4 L3.4 6 L8.4 0.8" fill="none" stroke="#444" stroke-width="1.15"/></svg>
<svg style="position:absolute;left:559px;top:385px;" width="9" height="7" viewBox="0 0 9 7"><path d="M0.8 3.4 L3.4 6 L8.4 0.8" fill="none" stroke="#444" stroke-width="1.15"/></svg>
<svg style="position:absolute;left:559px;top:409px;" width="9" height="7" viewBox="0 0 9 7"><path d="M0.8 3.4 L3.4 6 L8.4 0.8" fill="none" stroke="#444" stroke-width="1.15"/></svg>
<svg style="position:absolute;left:559px;top:432px;" width="9" height="7" viewBox="0 0 9 7"><path d="M0.8 3.4 L3.4 6 L8.4 0.8" fill="none" stroke="#444" stroke-width="1.15"/></svg>
<svg style="position:absolute;left:559px;top:455px;" width="9" height="7" viewBox="0 0 9 7"><path d="M0.8 3.4 L3.4 6 L8.4 0.8" fill="none" stroke="#444" stroke-width="1.15"/></svg>
<div style="position:absolute;left:553px;top:470px;width:158px;height:24px;background:#ececec;"></div>
<svg style="position:absolute;left:559px;top:737px;" width="9" height="7" viewBox="0 0 9 7"><path d="M0.8 3.4 L3.4 6 L8.4 0.8" fill="none" stroke="#444" stroke-width="1.15"/></svg>
<span class="t" style="left:572.4px;top:146.00px;font-size:13px;color:#333;letter-spacing:0.300px;">Kustannuspaikka</span>
<span class="t" style="left:572.4px;top:169.00px;font-size:13px;color:#333;letter-spacing:0.300px;">Työnro</span>
<span class="t" style="left:571.4px;top:193.00px;font-size:13px;color:#333;letter-spacing:0.300px;">Hälytys</span>
<span class="t" style="left:571.4px;top:217.00px;font-size:13px;color:#333;letter-spacing:0.300px;">Tilaus %</span>
<span class="t" style="left:572.4px;top:240.00px;font-size:13px;color:#333;letter-spacing:0.300px;">Tarjous</span>
<span class="t" style="left:572.4px;top:263.00px;font-size:13px;color:#333;letter-spacing:0.300px;">Tarjous alv 0%</span>
<span class="t" style="left:571.4px;top:287.00px;font-size:13px;color:#333;letter-spacing:0.300px;">Toimitettu</span>
<span class="t" style="left:571.4px;top:311.00px;font-size:13px;color:#333;letter-spacing:0.300px;">Jälkitoimitus</span>
<span class="t" style="left:571.4px;top:334.00px;font-size:13px;color:#333;letter-spacing:0.300px;">Avoin</span>
<span class="t" style="left:571.4px;top:357.00px;font-size:13px;color:#333;letter-spacing:0.300px;">Keräilylistalla</span>
<span class="t" style="left:571.4px;top:381.00px;font-size:13px;color:#333;letter-spacing:0.300px;">Toimitettu alv 0%</span>
<span class="t" style="left:571.4px;top:405.00px;font-size:13px;color:#333;letter-spacing:0.300px;">Jälkitoimitus alv 0%</span>
<span class="t" style="left:571.4px;top:428.00px;font-size:13px;color:#333;letter-spacing:0.300px;">Avoin alv 0%</span>
<span class="t" style="left:571.4px;top:451.00px;font-size:13px;color:#333;letter-spacing:0.300px;">Keräilylistalla alv 0%</span>
<span class="t" style="left:573px;top:475.00px;font-size:13px;color:#ee7d45;letter-spacing:0.300px;">A.Kate alv 0%</span>
<span class="t" style="left:572.4px;top:499.00px;font-size:13px;color:#333;letter-spacing:0.300px;">A.Kate-%</span>
<span class="t" style="left:572.4px;top:522.00px;font-size:13px;color:#333;letter-spacing:0.300px;">B.Kate alv 0%</span>
<span class="t" style="left:572.4px;top:545.00px;font-size:13px;color:#333;letter-spacing:0.300px;">B.Kate-%</span>
<span class="t" style="left:572.4px;top:569.00px;font-size:13px;color:#333;letter-spacing:0.300px;">Sopimustilanne</span>
<span class="t" style="left:572.4px;top:593.00px;font-size:13px;color:#333;letter-spacing:0.300px;">Vastuuhenkilö</span>
<span class="t" style="left:572.4px;top:616.00px;font-size:13px;color:#333;letter-spacing:0.300px;">Oma kenttä 3</span>
<span class="t" style="left:572.4px;top:639.00px;font-size:13px;color:#333;letter-spacing:0.300px;">Varakenttä4</span>
<span class="t" style="left:572.4px;top:663.00px;font-size:13px;color:#333;letter-spacing:0.300px;">Varakenttä5</span>
<span class="t" style="left:572.4px;top:687.00px;font-size:13px;color:#333;letter-spacing:0.300px;">Varakenttä6</span>
<span class="t" style="left:572.4px;top:710.00px;font-size:13px;color:#333;letter-spacing:0.300px;">Kuormakirja</span>
<span class="t" style="left:571.4px;top:733.00px;font-size:13px;color:#333;letter-spacing:0.300px;">Yhteenveto</span>
</body></html>
